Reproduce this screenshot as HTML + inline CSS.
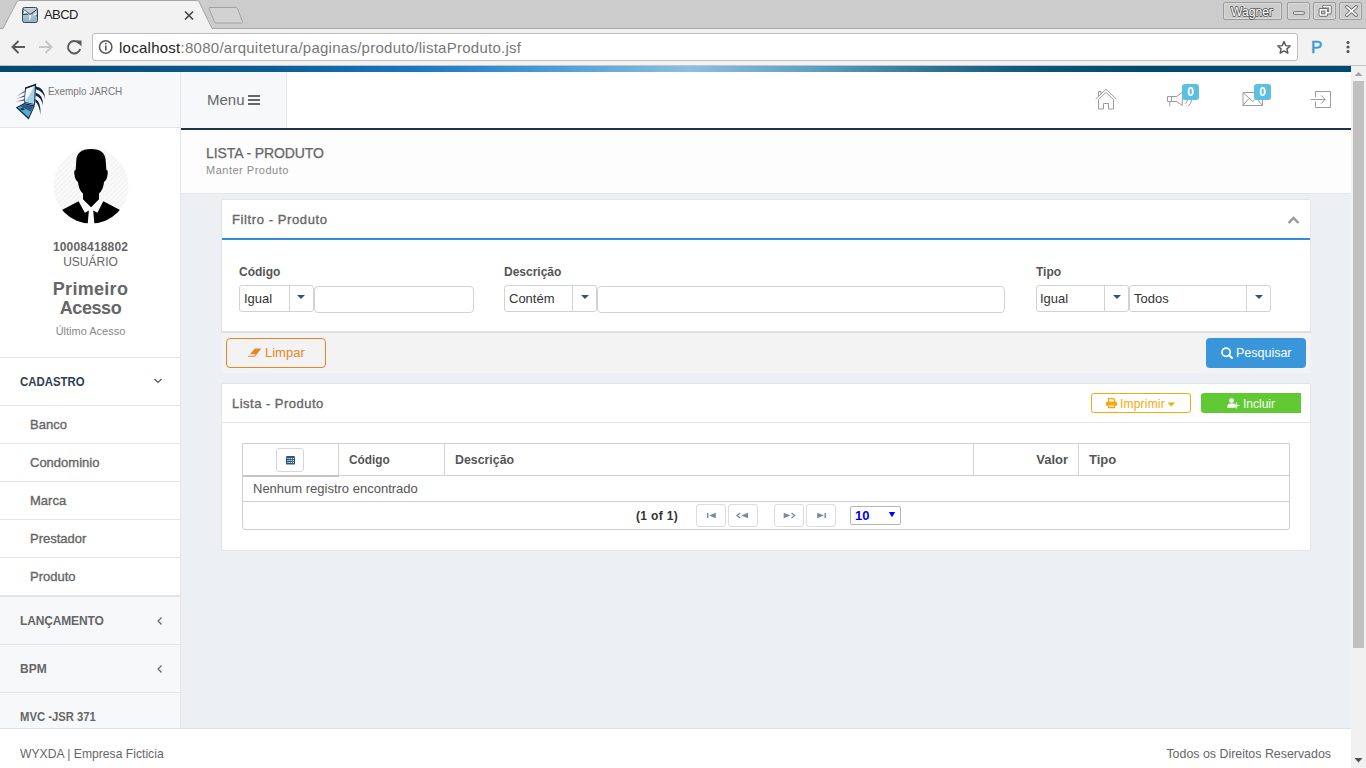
<!DOCTYPE html>
<html><head><meta charset="utf-8">
<style>
*{box-sizing:border-box;margin:0;padding:0}
html,body{width:1366px;height:768px;overflow:hidden;background:#eceff4;font-family:"Liberation Sans",sans-serif;}
.a{position:absolute}
.t{position:absolute;white-space:nowrap;line-height:1}
/* chrome */
#tabbar{left:0;top:0;width:1366px;height:29px;background:#cccccc;border-bottom:1px solid #a8a8a8}
#toolbar{left:0;top:29px;width:1366px;height:37px;background:#f2f2f2}
#addr{left:92px;top:33px;width:1206px;height:28px;background:#fff;border:1px solid #bdbdbd;border-radius:3px}
/* page */
#bluebar{left:0;top:66px;width:1351px;height:6px;background:linear-gradient(90deg,#03486e 0%,#0b5d96 20%,#1a78c0 31%,#52a0d8 42%,#8bbfdf 51%,#60a0c4 60%,#2f7394 69%,#0b5679 77%,#004a70 84%,#004a72 100%)}
#scroll{left:1351px;top:66px;width:15px;height:702px;background:#f1f1f1}
#thumb{left:1353px;top:81px;width:11px;height:567px;background:#c1c1c1}
#sidehdr{left:0;top:72px;width:181px;height:56px;background:#f7f8fa;border-bottom:1px solid #e2e3e5}
#side{left:0;top:128px;width:181px;height:600px;background:#fff;border-right:1px solid #e4e5e8}
#menu{left:181px;top:72px;width:106px;height:56px;background:#f7f8fa;border-right:1px solid #e6e7ea}
#topnav{left:287px;top:72px;width:1064px;height:56px;background:#fff}
#navline{left:181px;top:128px;width:1170px;height:2px;background:#1f344c}
#pghdr{left:181px;top:130px;width:1170px;height:64px;background:#fdfdfd;border-bottom:1px solid #e3e5e8}
#footer{left:0;top:728px;width:1351px;height:40px;background:#fff;border-top:1px solid #dfe1e4}
.panel{background:#fff;border:1px solid #e3e5e8}
.sel{border:1px solid #d2d2d2;border-radius:3px;background:#fff}
.sel i{position:absolute;top:0;width:1px;height:25px;background:#d2d2d2}
.sel b{position:absolute;top:9px;width:0;height:0;border-left:4px solid transparent;border-right:4px solid transparent;border-top:4.5px solid #2b5876}
.inp{border:1px solid #d2d2d2;border-radius:4px;background:#fff}
.semi{font-weight:normal;-webkit-text-stroke:0.35px currentColor}
.pbtn{width:30px;height:23px;border:1px solid #dcdcdc;border-radius:3px;background:#fff}
</style></head><body>
<!-- Browser chrome -->
<div id="tabbar" class="a"></div>
<div id="toolbar" class="a"></div>
<svg class="a" style="left:0;top:0" width="260" height="30">
<path d="M3 28.5 L17 1.5 Q18 0.5 20 0.5 L196 0.5 Q198 0.5 199 1.5 L212 28.5" fill="#f2f2f2" stroke="#a4a4a4" stroke-width="1"/><rect x="3.5" y="28" width="208" height="2" fill="#f2f2f2"/>
<path d="M209.5 7.5 L236 7.5 Q237 7.5 237.5 8.5 L242.5 21.5 Q243 23 241.5 23 L216 23 Q215 23 214.5 22 L209 8.5 Q208.8 7.5 209.5 7.5Z" fill="#d2d2d2" stroke="#a2a2a2" stroke-width="1"/>
</svg>
<div class="a" style="left:0;top:65px;width:1366px;height:1px;background:#c4c4c4"></div>
<div id="addr" class="a"></div>
<!-- favicon -->
<svg class="a" style="left:22px;top:7px" width="16" height="16"><defs><linearGradient id="fv" x1="0" y1="0" x2="0" y2="1"><stop offset="0" stop-color="#c9d5dd"/><stop offset="1" stop-color="#8fb1c2"/></linearGradient></defs>
<rect x="0.5" y="0.5" width="15" height="15" rx="2" fill="url(#fv)" stroke="#34495a" stroke-width="1"/>
<path d="M1 2L8 7.5L15 2.5M1 4.5L6 7.5M1 7.5L5.5 7M10 7L15 9" fill="none" stroke="#2e3e4c" stroke-width="1"/>
<path d="M2 3.2L6.5 6.5L2 6.2Z M9.5 8L14 8.8L14 6.2Z M7.5 7.5L9 8.5L8 13.5L6.8 13Z" fill="#ffffff"/>
</svg>
<div class="t" style="left:44px;top:8px;font-size:13px;color:#222;letter-spacing:-0.6px">ABCD</div>
<svg class="a" style="left:184px;top:10px" width="10" height="10"><path d="M1 1.5L9 9.5M9 1.5L1 9.5" stroke="#444" stroke-width="1.6"/></svg>
<!-- window buttons -->
<div class="a" style="left:1223px;top:2px;width:59px;height:18px;border:1px solid #9c9c9c;border-radius:2px;background:#cdcdcd;box-shadow:inset 0 0 0 1px #d9d9d9"></div>
<div class="t" style="left:1231px;top:5px;font-size:13px;color:#4a4a4a;-webkit-text-stroke:1.6px #555;transform-origin:0 0;transform:scaleX(0.93)">Wagner</div><div class="t" style="left:1231px;top:5px;font-size:13px;color:#fff;transform-origin:0 0;transform:scaleX(0.93)">Wagner</div>
<div class="a" style="left:1287px;top:2px;width:23px;height:18px;border:1px solid #9c9c9c;border-radius:2px;background:#cdcdcd;box-shadow:inset 0 0 0 1px #d9d9d9"></div>
<div class="a" style="left:1313px;top:2px;width:23px;height:18px;border:1px solid #9c9c9c;border-radius:2px;background:#cdcdcd;box-shadow:inset 0 0 0 1px #d9d9d9"></div>
<div class="a" style="left:1339px;top:2px;width:23px;height:18px;border:1px solid #9c9c9c;border-radius:2px;background:#cdcdcd;box-shadow:inset 0 0 0 1px #d9d9d9"></div>
<svg class="a" style="left:1287px;top:2px" width="76" height="18" fill="none" stroke-linecap="round" stroke-linejoin="round">
<g stroke="#6a6a6a" stroke-width="3.4"><path d="M7.6 11H16.2"/><path d="M36.8 4.6H43V10.8H40M35 7.8H39.3V13H33.3V7.8Z"/><path d="M59.8 4.8L69.2 13.2M69.2 4.8L59.8 13.2"/></g>
<g stroke="#ffffff" stroke-width="1.6"><path d="M7.6 11H16.2"/><path d="M36.8 4.6H43V10.8H40M35 7.8H39.3V13H33.3V7.8Z"/><path d="M59.8 4.8L69.2 13.2M69.2 4.8L59.8 13.2"/></g>
</svg>
<!-- nav icons -->
<svg class="a" style="left:0;top:28px" width="120" height="38">
<path d="M25 19H13M18.5 13L12.5 19L18.5 25" fill="none" stroke="#5a5a5a" stroke-width="2"/>
<path d="M39 19H51M45.5 13L51.5 19L45.5 25" fill="none" stroke="#c6c6c6" stroke-width="2"/>
<path d="M79.2 15.5A6.2 6.2 0 1 0 80.2 21" fill="none" stroke="#5a5a5a" stroke-width="2"/><path d="M75.5 12.5H81.5V18.5Z" fill="#5a5a5a"/>
<circle cx="105.7" cy="19" r="6.2" fill="none" stroke="#5a5a5a" stroke-width="1.5"/><rect x="105" y="17.5" width="1.6" height="5" fill="#5a5a5a"/><rect x="105" y="14.8" width="1.6" height="1.7" fill="#5a5a5a"/>
</svg>
<div class="t" style="left:119px;top:40px;font-size:15px;color:#222;letter-spacing:0.26px">localhost<span style="color:#777">:8080/arquitetura/paginas/produto/listaProduto.jsf</span></div>
<svg class="a" style="left:1270px;top:34px" width="96" height="26">
<path d="M14 7.5L15.8 11.6L20.2 12L16.9 14.9L17.9 19.2L14 16.9L10.1 19.2L11.1 14.9L7.8 12L12.2 11.6Z" fill="none" stroke="#555" stroke-width="1.4" stroke-linejoin="round"/>
<circle cx="78" cy="8.5" r="1.6" fill="#555"/><circle cx="78" cy="13" r="1.6" fill="#555"/><circle cx="78" cy="17.5" r="1.6" fill="#555"/>
</svg>
<div class="t" style="left:1311px;top:39px;font-size:17px;color:#3a9ad9;-webkit-text-stroke:0.5px #3a9ad9">P</div>
<!-- Page -->
<div id="bluebar" class="a"></div>
<div id="sidehdr" class="a"></div>
<svg class="a" style="left:12px;top:82px" width="36" height="40" viewBox="0 0 36 40">
<defs><linearGradient id="sl" x1="0" x2="1"><stop offset="0" stop-color="#0f2248" stop-opacity="0"/><stop offset="1" stop-color="#0f2248"/></linearGradient>
<linearGradient id="fd" x1="0" y1="0" x2="0" y2="1"><stop offset="0.6" stop-color="#0f2248"/><stop offset="1" stop-color="#0f2248" stop-opacity="0"/></linearGradient></defs>
<path d="M3.5 14.6L12.6 8.9L12.6 10L3.5 15.2Z" fill="url(#sl)"/>
<path d="M3.5 17.2L12.6 13.3L12.6 14.5L3.5 17.8Z" fill="url(#sl)"/>
<path d="M3.5 19.6L12.4 17.2L12.4 18.4L3.5 20.2Z" fill="url(#sl)"/>
<path d="M13 5.5L24.2 1.6L23 23L12.2 20.8Z" fill="#0f2248"/>
<path d="M14 6.9L22.9 3.7L22.1 22L12.9 20Z" fill="#a3d2ea"/>
<path d="M14 6.9L22 4.2Q18 13 12.9 19.5Z" fill="#ffffff"/>
<path d="M3.8 25.5L12.2 21L23 23.6L16.7 37.4Z" fill="#0f2248"/>
<path d="M5.6 25.6L12.5 22.2L21.6 24.4L16.5 35.6Z" fill="#58abc9"/>
<path d="M8.5 24.4L12.6 22.4L21 24.5L18.8 29.4Z" fill="#2b5b82"/>
<path d="M7.6 27L10.5 25.6L13 27.5L10.5 28.6Z" fill="#173a66"/>
<path d="M24 4.6Q33 6 33.2 17.5Q31.8 9.5 24 7.2Z" fill="#0f2248"/>
<path d="M23.7 10.8Q31.2 12.5 30.9 23.5Q29.6 15.5 23.6 13.4Z" fill="#0f2248"/>
<path d="M23.4 17.2Q29 19 28.6 34.5Q27.2 22 23.3 19.8Z" fill="url(#fd)"/>
</svg>
<div class="t" style="left:48px;top:86px;font-size:11.5px;color:#777;transform-origin:0 0;transform:scaleX(0.86)">Exemplo JARCH</div>
<div class="a" style="left:180px;top:72px;width:1px;height:56px;background:#e4e5e8"></div>
<div id="side" class="a"></div>
<!-- avatar -->
<svg class="a" style="left:53px;top:148px" width="76" height="76" viewBox="0 0 76 76">
<defs><pattern id="st" width="3.5" height="3.5" patternUnits="userSpaceOnUse" patternTransform="rotate(45)"><rect width="3.5" height="3.5" fill="#fafafa"/><rect width="1.2" height="3.5" fill="#f1f1f1"/></pattern>
<clipPath id="cc"><circle cx="38" cy="38" r="37.6"/></clipPath></defs>
<circle cx="38" cy="38" r="37.6" fill="url(#st)"/>
<g clip-path="url(#cc)">
<path d="M38 1C28 1 23.2 5 23.2 14L22.6 22C21 22 21 24 21.5 27C22 31 23.5 33 25 34C25.5 40 28 44 30 45.5L30 51.4L38 59.4L46 51.4L46 45.5C48 44 50.5 40 51 34C52.5 33 54 31 54.5 27C55 24 55 22 53.4 22L52.8 14C52.8 5 48 1 38 1Z" fill="#000"/>
<path d="M25.5 53.3L30 51.4L38 59.4L46 51.4L50.3 53.3L44.4 64.7L40.2 62.6L41.5 77L34.6 77L35.9 62.6L31.9 64.7Z" fill="#fff"/>
<path d="M8.9 62.1L25.5 53.3L31.9 64.7L35.9 62.6L34.6 77L0 77L0 62Z" fill="#000"/>
<path d="M67.1 62.1L50.3 53.3L44.4 64.7L40.2 62.6L41.5 77L76 77L76 62Z" fill="#000"/>
</g>
</svg>
<div class="t" style="left:0;width:181px;text-align:center;top:241px;font-size:12px;font-weight:bold;color:#666;letter-spacing:0.15px">10008418802</div>
<div class="t" style="left:0;width:181px;text-align:center;top:256px;font-size:12px;color:#666">USUÁRIO</div>
<div class="t" style="left:0;width:181px;text-align:center;top:280px;font-size:18px;font-weight:bold;color:#666;line-height:19px;letter-spacing:0.3px">Primeiro</div>
<div class="t" style="left:0;width:181px;text-align:center;top:299px;font-size:18px;font-weight:bold;color:#666;line-height:19px;letter-spacing:-0.4px">Acesso</div>
<div class="t" style="left:0;width:181px;text-align:center;top:326px;font-size:11px;color:#888">Último Acesso</div>
<div class="a" style="left:0;top:357px;width:180px;height:1px;background:#e4e5e8"></div>
<div class="t" style="left:20px;top:376px;font-size:12px;font-weight:bold;color:#2d3e55;transform-origin:0 0;transform:scaleX(0.95)">CADASTRO</div>
<svg class="a" style="left:153px;top:377px" width="10" height="8"><path d="M1.5 2L5 5.5L8.5 2" fill="none" stroke="#4a5a70" stroke-width="1.2"/></svg>
<div class="a" style="left:0;top:405px;width:180px;height:1px;background:#e4e5e8"></div>
<div class="t semi" style="left:30px;top:418px;font-size:13px;color:#666;">Banco</div>
<div class="a" style="left:0;top:443px;width:180px;height:1px;background:#e4e5e8"></div>
<div class="t semi" style="left:30px;top:456px;font-size:13px;color:#666;">Condominio</div>
<div class="a" style="left:0;top:481px;width:180px;height:1px;background:#e4e5e8"></div>
<div class="t semi" style="left:30px;top:494px;font-size:13px;color:#666;">Marca</div>
<div class="a" style="left:0;top:519px;width:180px;height:1px;background:#e4e5e8"></div>
<div class="t semi" style="left:30px;top:532px;font-size:13px;color:#666;">Prestador</div>
<div class="a" style="left:0;top:557px;width:180px;height:1px;background:#e4e5e8"></div>
<div class="t semi" style="left:30px;top:570px;font-size:13px;color:#666;">Produto</div>
<div class="a" style="left:0;top:595px;width:180px;height:133px;background:#f7f8fa;border-top:2px solid #e3e4e7"></div>
<div class="t" style="left:20px;top:615px;font-size:12px;font-weight:bold;color:#666;letter-spacing:-0.15px">LANÇAMENTO</div>
<svg class="a" style="left:156px;top:616px" width="8" height="10"><path d="M5.5 1.5L2 5L5.5 8.5" fill="none" stroke="#666" stroke-width="1.2"/></svg>
<div class="a" style="left:0;top:644px;width:180px;height:1px;background:#e4e5e8"></div>
<div class="t" style="left:20px;top:663px;font-size:12px;font-weight:bold;color:#666">BPM</div>
<svg class="a" style="left:156px;top:664px" width="8" height="10"><path d="M5.5 1.5L2 5L5.5 8.5" fill="none" stroke="#666" stroke-width="1.2"/></svg>
<div class="a" style="left:0;top:692px;width:180px;height:1px;background:#e4e5e8"></div>
<div class="t" style="left:20px;top:711px;font-size:12px;font-weight:bold;color:#666;transform-origin:0 0;transform:scaleX(0.94)">MVC -JSR 371</div>
<div id="menu" class="a"></div>
<div class="t" style="left:207px;top:92px;font-size:15px;color:#666">Menu</div>
<div class="a" style="left:248px;top:95px;width:12px;height:2px;background:#666;box-shadow:0 4px 0 #666,0 8px 0 #666"></div>
<div id="topnav" class="a"></div>
<!-- header icons -->
<svg class="a" style="left:1090px;top:84px" width="250" height="28" fill="none" stroke="#9c9c9c" stroke-width="1">
<path d="M5.7 15L16 5.2L26.3 15"/>
<path d="M8.5 25V15.5L16 8.4L23.5 15.5V25H18.5V19.5H13.5V25Z"/>
<path d="M8.5 12V7.5H11V10"/>
<path d="M77.5 12.5H86.8L92 8.5M77.5 12.5V17.5H86.8L92.3 21.5V14M81.5 12.5V17.5M79.8 17.5V22.5M97.4 16Q97.2 18.2 95 19.8M101.6 16Q101.2 20 98.2 22"/>
<path d="M153 8.5H172.5V21.5H153ZM153 8.5L162.8 17.5L172.5 8.5M153 21.5L158.5 15M172.5 21.5L167 15"/>
<path d="M225.5 13.5V7.5H240.5V23.5H225.5V17.5M220.8 15.5H235M231 11.3L235.2 15.5L231 19.7"/>
</svg>
<div class="a" style="left:1182px;top:84px;width:17px;height:16px;background:#5bc0de;border-radius:3px"></div>
<div class="t" style="left:1182px;top:86px;width:17px;text-align:center;font-size:12px;font-weight:bold;color:#fff">0</div>
<div class="a" style="left:1254px;top:84px;width:17px;height:16px;background:#5bc0de;border-radius:3px"></div>
<div class="t" style="left:1254px;top:86px;width:17px;text-align:center;font-size:12px;font-weight:bold;color:#fff">0</div>
<div id="navline" class="a"></div>
<div id="pghdr" class="a"></div>
<div class="t" style="left:206px;top:146px;font-size:14px;color:#666;letter-spacing:-0.1px;-webkit-text-stroke:0.25px #666">LISTA - PRODUTO</div>
<div class="t" style="left:206px;top:165px;font-size:11px;color:#8c8c8c;letter-spacing:0.5px">Manter Produto</div>

<!-- Filter panel -->
<div class="a panel" style="left:221px;top:199px;width:1090px;height:174px;border-radius:2px"></div>
<div class="t semi" style="left:232px;top:213px;font-size:13px;color:#666;letter-spacing:0.6px">Filtro - Produto</div>
<svg class="a" style="left:1286px;top:214px" width="15" height="12"><path d="M2.5 9L7.5 4L12.5 9" fill="none" stroke="#9a9a9a" stroke-width="2.4"/></svg>
<div class="a" style="left:222px;top:238px;width:1088px;height:2px;background:#2e8ed9"></div>
<div class="t" style="left:239px;top:266px;font-size:12px;color:#555;font-weight:bold">Código</div>
<div class="t" style="left:504px;top:266px;font-size:12px;color:#555;font-weight:bold">Descrição</div>
<div class="t" style="left:1036px;top:266px;font-size:12px;color:#555;font-weight:bold">Tipo</div>
<!-- selects -->
<div class="a sel" style="left:239px;top:285px;width:75px;height:27px"><i style="left:49px"></i><b style="left:57px"></b></div>
<div class="t" style="left:244px;top:292px;font-size:13px;color:#333">Igual</div>
<div class="a inp" style="left:314px;top:286px;width:160px;height:27px"></div>
<div class="a sel" style="left:504px;top:285px;width:93px;height:27px"><i style="left:67px"></i><b style="left:76px"></b></div>
<div class="t" style="left:509px;top:292px;font-size:13px;color:#333">Contém</div>
<div class="a inp" style="left:597px;top:286px;width:408px;height:27px"></div>
<div class="a sel" style="left:1036px;top:285px;width:93px;height:27px"><i style="left:67px"></i><b style="left:76px"></b></div>
<div class="t" style="left:1040px;top:292px;font-size:13px;color:#333">Igual</div>
<div class="a sel" style="left:1129px;top:285px;width:142px;height:27px"><i style="left:116px"></i><b style="left:125px"></b></div>
<div class="t" style="left:1134px;top:292px;font-size:13px;color:#333">Todos</div>
<!-- footer -->
<div class="a" style="left:221px;top:331px;width:1090px;height:42px;background:#f3f3f3;border-top:2px solid #e0e0e0"></div>
<div class="a" style="left:226px;top:338px;width:100px;height:30px;border:1px solid #e8832a;border-radius:4px"></div>
<svg class="a" style="left:247px;top:348px" width="15" height="10"><path d="M7.9 0.5H14.2L7.9 8.7H0.8Z" fill="#e8832a"/><path d="M2.8 6.2H8.6L7.4 7.7H1.8Z" fill="#f3f3f3"/></svg>
<div class="t" style="left:265px;top:346px;font-size:13px;color:#e8832a">Limpar</div>
<div class="a" style="left:1206px;top:338px;width:100px;height:30px;background:#3a96da;border-radius:4px"></div>
<svg class="a" style="left:1220px;top:346px" width="14" height="14"><circle cx="6.1" cy="6.2" r="4.1" fill="none" stroke="#fff" stroke-width="1.7"/><path d="M9 9.2L12 12" stroke="#fff" stroke-width="2" stroke-linecap="round"/></svg>
<div class="t" style="left:1236px;top:346px;font-size:13px;color:#fff;transform-origin:0 0;transform:scaleX(0.96)">Pesquisar</div>

<!-- List panel -->
<div class="a panel" style="left:221px;top:383px;width:1090px;height:168px;border-radius:2px"></div>
<div class="a" style="left:222px;top:422px;width:1088px;height:1px;background:#e6e7ea"></div>
<div class="t semi" style="left:232px;top:397px;font-size:13px;color:#666;letter-spacing:0.48px">Lista - Produto</div>
<div class="a" style="left:1091px;top:393px;width:100px;height:20px;border:1px solid #f6a90c;border-radius:3px"></div>
<svg class="a" style="left:1106px;top:398px" width="12" height="11" fill="none" stroke="#f6a90c" stroke-width="1.3"><path d="M2.6 4.2V0.7H7.2L8.6 2.1V4.2"/><path d="M1.2 3.8H9.8Q11 3.8 11 5V7.4H8.6M2.4 7.4H0V5Q0 3.8 1.2 3.8" fill="#f6a90c" stroke="none"/><rect x="0" y="3.8" width="11" height="3.6" rx="1.2" fill="#f6a90c" stroke="none"/><path d="M2.6 6.2H8.4V9.5H2.6Z"/></svg>
<div class="t" style="left:1120px;top:398px;font-size:12px;color:#f6a90c;letter-spacing:0.2px">Imprimir</div>
<svg class="a" style="left:1167px;top:402px" width="9" height="5"><path d="M0.5 0.5H8L4.25 4.5Z" fill="#f6a90c"/></svg>
<div class="a" style="left:1201px;top:393px;width:100px;height:20px;background:#61c933;border-radius:3px 0 0 3px"></div>
<svg class="a" style="left:1227px;top:398px" width="14" height="11" fill="#fff"><circle cx="4.6" cy="2.6" r="2.4"/><path d="M0.2 9.8Q0.2 5.6 3 5.5L6.5 5.5Q8 5.6 8.6 6.6V9.8Z"/><path d="M8.9 4.6H10.1V6.9H12.5V8.1H10.1V10.5H8.9V8.1H6.5V6.9H8.9Z"/></svg>
<div class="t" style="left:1243px;top:398px;font-size:12px;color:#fff">Incluir</div>

<!-- table -->
<div class="a" style="left:242px;top:443px;width:1048px;height:87px;border:1px solid #cfcfcf;border-radius:0 0 3px 3px"></div>
<div class="a" style="left:243px;top:475px;width:1046px;height:1px;background:#cfcfcf"></div>
<div class="a" style="left:243px;top:475px;width:96px;height:2px;background:#c4c4c4"></div>
<div class="a" style="left:338px;top:444px;width:1px;height:31px;background:#d3d3d3"></div>
<div class="a" style="left:444px;top:444px;width:1px;height:31px;background:#d3d3d3"></div>
<div class="a" style="left:973px;top:444px;width:1px;height:31px;background:#d3d3d3"></div>
<div class="a" style="left:1078px;top:444px;width:1px;height:31px;background:#d3d3d3"></div>
<div class="a" style="left:276px;top:448px;width:28px;height:24px;border:1px solid #d7d7d7;border-radius:3px;background:#fff"></div>
<svg class="a" style="left:286px;top:456px" width="9" height="9"><rect x="0" y="0" width="9" height="8.6" rx="1.2" fill="#2b5a7a"/><g fill="#fff"><rect x="1.5" y="2" width="1" height="1"/><rect x="3.3" y="2" width="1" height="1"/><rect x="5.1" y="2" width="1" height="1"/><rect x="6.9" y="2" width="1" height="1"/><rect x="1.5" y="4" width="1" height="1"/><rect x="3.3" y="4" width="1" height="1"/><rect x="5.1" y="4" width="1" height="1"/><rect x="6.9" y="4" width="1" height="1"/><rect x="1.5" y="6" width="1" height="1"/><rect x="3.3" y="6" width="1" height="1"/><rect x="5.1" y="6" width="1" height="1"/><rect x="6.9" y="6" width="1" height="1"/></g></svg>
<div class="t" style="left:349px;top:453px;font-size:13px;color:#555;font-weight:bold;transform-origin:0 0;transform:scaleX(0.91)">Código</div>
<div class="t" style="left:455px;top:453px;font-size:13px;color:#555;font-weight:bold;transform-origin:0 0;transform:scaleX(0.95)">Descrição</div>
<div class="t" style="left:1000px;width:68px;text-align:right;top:453px;font-size:13px;color:#555;font-weight:bold">Valor</div>
<div class="t" style="left:1089px;top:453px;font-size:13px;color:#555;font-weight:bold">Tipo</div>
<div class="t" style="left:253px;top:482px;font-size:13px;color:#555">Nenhum registro encontrado</div>
<div class="a" style="left:243px;top:501px;width:1046px;height:1px;background:#cfcfcf"></div>
<div class="t" style="left:636px;top:510px;font-size:12px;color:#333;font-weight:bold;letter-spacing:0.35px">(1 of 1)</div>
<div class="a pbtn" style="left:696px;top:504px"></div>
<div class="a pbtn" style="left:728px;top:504px"></div>
<div class="a pbtn" style="left:774px;top:504px"></div>
<div class="a pbtn" style="left:806px;top:504px"></div>
<svg class="a" style="left:696px;top:504px" width="140" height="22" fill="#748d9b">
<rect x="10.9" y="9" width="1.5" height="5"/><path d="M19.8 8.8V14.2L13 11.5Z"/>
<path d="M44.2 9L41 11.5L44.2 14" fill="none" stroke="#748d9b" stroke-width="1.3"/><path d="M52 8.8V14.2L45.2 11.5Z"/>
<path d="M87.7 8.8V14.2L94.5 11.5Z"/><path d="M95.5 9L98.7 11.5L95.5 14" fill="none" stroke="#748d9b" stroke-width="1.3"/>
<path d="M121.2 8.8V14.2L128 11.5Z"/><rect x="128.5" y="9" width="1.5" height="5"/>
</svg>
<div class="a" style="left:850px;top:506px;width:51px;height:19px;border:1px solid #b5b5b5;border-radius:2px;background:#fff"></div>
<div class="t" style="left:855px;top:509px;font-size:13px;color:#0000ee;font-weight:bold">10</div>
<svg class="a" style="left:888px;top:511px" width="8" height="7"><path d="M0.8 1H7.2L4 6.2Z" fill="#0000ee"/></svg>
<div id="footer" class="a"></div>
<div class="t" style="left:20px;top:747px;font-size:13px;color:#666;transform-origin:0 0;transform:scaleX(0.935)">WYXDA | Empresa Ficticia</div>
<div class="t" style="left:1000px;width:331px;text-align:right;top:747px;font-size:13px;color:#666;transform-origin:100% 0;transform:scaleX(0.953)">Todos os Direitos Reservados</div>
<div id="scroll" class="a"></div>
<div id="thumb" class="a"></div>
<svg class="a" style="left:1351px;top:66px" width="15" height="702"><path d="M3.5 10H11.5L7.5 6Z" fill="#a3a3a3"/><path d="M3.5 692H11.5L7.5 696.5Z" fill="#505050"/></svg>
</body></html>
